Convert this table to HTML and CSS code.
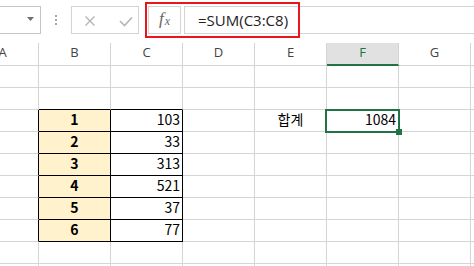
FILE: index.html
```html
<!DOCTYPE html>
<html lang="ko">
<head>
<meta charset="utf-8">
<title>Excel SUM</title>
<link rel="stylesheet" href="styles.css">
</head>
<body>
<div class="app">
  <div class="fbar">
    <div class="namebox">
      <svg class="caret" width="7" height="4" viewBox="0 0 7 4"><polygon points="0,0 7,0 3.5,4" fill="#6f6f6f"/></svg>
    </div>
    <div class="dots">
      <svg width="2" height="10" viewBox="0 0 2 10"><rect x="0" y="0" width="2" height="2" fill="#a8a8a8"/><rect x="0" y="4" width="2" height="2" fill="#a8a8a8"/><rect x="0" y="8" width="2" height="2" fill="#a8a8a8"/></svg>
    </div>
    <div class="btns">
      <svg width="66" height="26" viewBox="0 0 66 26">
        <path d="M13.5 9.5 L22.5 18.5 M22.5 9.5 L13.5 18.5" stroke="#b5b5b5" stroke-width="1.4" fill="none"/>
        <path d="M48 14 L52.5 18.5 L60 10.5" stroke="#b5b5b5" stroke-width="1.6" fill="none"/>
      </svg>
    </div>
    <div class="fx"><span class="fx-f">f</span><span class="fx-x">x</span></div>
    <div class="input">=SUM(C3:C8)</div>
    <div class="hl"></div>
  </div>
  <div class="grid">
    <div class="h">A</div><div class="h">B</div><div class="h">C</div><div class="h">D</div><div class="h">E</div><div class="h hs">F</div><div class="h">G</div><div class="h"></div>

    <div class="c"></div><div class="c"></div><div class="c"></div><div class="c"></div><div class="c"></div><div class="c"></div><div class="c"></div><div class="c"></div>

    <div class="c"></div><div class="c tb"></div><div class="c tb"></div><div class="c"></div><div class="c"></div><div class="c"></div><div class="c"></div><div class="c"></div>

    <div class="c ar"></div><div class="c t key">1</div><div class="c t num">103</div><div class="c"></div><div class="c ko">합계</div><div class="c num sel">1084</div><div class="c"></div><div class="c"></div>

    <div class="c ar"></div><div class="c t key">2</div><div class="c t num">33</div><div class="c"></div><div class="c"></div><div class="c"></div><div class="c"></div><div class="c"></div>

    <div class="c ar"></div><div class="c t key">3</div><div class="c t num">313</div><div class="c"></div><div class="c"></div><div class="c"></div><div class="c"></div><div class="c"></div>

    <div class="c ar"></div><div class="c t key">4</div><div class="c t num">521</div><div class="c"></div><div class="c"></div><div class="c"></div><div class="c"></div><div class="c"></div>

    <div class="c ar"></div><div class="c t key">5</div><div class="c t num">37</div><div class="c"></div><div class="c"></div><div class="c"></div><div class="c"></div><div class="c"></div>

    <div class="c ar"></div><div class="c t key">6</div><div class="c t num">77</div><div class="c"></div><div class="c"></div><div class="c"></div><div class="c"></div><div class="c"></div>

    <div class="c"></div><div class="c"></div><div class="c"></div><div class="c"></div><div class="c"></div><div class="c"></div><div class="c"></div><div class="c"></div>

    <div class="c"></div><div class="c"></div><div class="c"></div><div class="c"></div><div class="c"></div><div class="c"></div><div class="c"></div><div class="c"></div>
  </div>
</div>
</body>
</html>
```
FILE: styles.css
```css
html, body {
  margin: 0;
  padding: 0;
  background: #ffffff;
  overflow: hidden;
}
.app {
  width: 474px;
  height: 266px;
  overflow: hidden;
  position: relative;
}
.fbar {
  position: relative;
  height: 43px;
  display: flex;
  align-items: flex-start;
  padding-top: 6px;
  box-sizing: border-box;
}
.namebox {
  margin-left: -1px;
  width: 42px;
  height: 28px;
  border: 1px solid #c6c6c6;
  box-sizing: border-box;
  display: flex;
  justify-content: flex-end;
  align-items: flex-start;
  padding-right: 6px;
  padding-top: 10px;
}
.caret { display: block; }
.dots {
  width: 30px;
  height: 28px;
  box-sizing: border-box;
  padding-left: 14px;
  padding-top: 9px;
}
.dots svg { display: block; }
.btns {
  width: 68px;
  height: 28px;
  border: 1px solid #d4d4d4;
  box-sizing: border-box;
}
.btns svg { display: block; }
.fx {
  margin-left: 9px;
  width: 33px;
  height: 28px;
  border: 1px solid #d4d4d4;
  box-sizing: border-box;
  display: flex;
  justify-content: center;
  align-items: center;
  font-family: "Liberation Serif", serif;
  font-style: italic;
  color: #666666;
  padding-bottom: 2px;
}
.fx-f { font-size: 17px; }
.fx-x { font-size: 12px; margin-left: 1px; margin-top: 4px; }
.input {
  margin-left: 3px;
  flex: 1;
  margin-right: -10px;
  height: 28px;
  border: 1px solid #d4d4d4;
  box-sizing: border-box;
  padding-left: 13px;
  font-family: "Open Sans", "Noto Sans", sans-serif;
  font-size: 15px;
  line-height: 26px;
  color: #222222;
}
.hl {
  position: absolute;
  left: 145px;
  top: 2px;
  width: 155px;
  height: 36px;
  border: 2px solid #e8161d;
  box-sizing: border-box;
}
.grid {
  margin-left: -33px;
  display: grid;
  grid-template-columns: repeat(8, 72px);
  grid-auto-rows: 22px;
  grid-template-rows: 23px;
}
.h {
  box-sizing: border-box;
  border-right: 1px solid #d4d4d4;
  border-bottom: 1px solid #d4d4d4;
  text-align: center;
  font-family: "Open Sans", "Noto Sans", sans-serif;
  font-size: 13px;
  line-height: 19px;
  color: #444444;
}
.hs {
  background: #e1e1e1;
  border-bottom: 2px solid #217346;
  color: #217346;
}
.c {
  box-sizing: border-box;
  border-right: 1px solid #d4d4d4;
  border-bottom: 1px solid #d4d4d4;
  font-family: "Noto Sans CJK KR", "Noto Sans", sans-serif;
  font-size: 14px;
  line-height: 19px;
  color: #000000;
  white-space: nowrap;
}
.tb { border-bottom-color: #000000; }
.ar { border-right-color: #000000; }
.t {
  border-right-color: #000000;
  border-bottom-color: #000000;
}
.key {
  background: #fff2cc;
  font-weight: 700;
  text-align: center;
}
.num {
  text-align: right;
  padding-right: 2px;
}
.ko {
  text-align: center;
}
.sel { position: relative; }
.sel::after {
  content: "";
  position: absolute;
  left: -2px;
  top: -1px;
  width: 75px;
  height: 24px;
  border: 2px solid #217346;
  box-sizing: border-box;
}
.sel::before {
  content: "";
  position: absolute;
  left: 69px;
  top: 19px;
  width: 6px;
  height: 6px;
  background: #217346;
  z-index: 1;
}
```
